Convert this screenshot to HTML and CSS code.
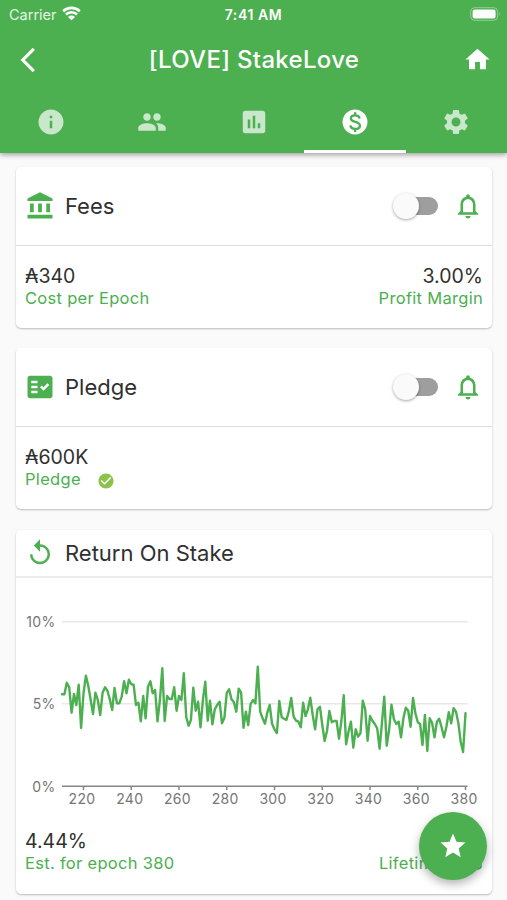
FILE: index.html
```html
<!DOCTYPE html>
<html lang="en">

<head>
    <meta charset="UTF-8">
    <title>StakeLove</title>
    <link rel="stylesheet" href="styles.css">
</head>

<body>
    <header class="app-bar">
        <div class="status">
            <div class="carrier">
                <span>Carrier</span>
                <svg width="19" height="15" viewBox="0 0 19 15">
                    <path d="M1.2 5.2a12 12 0 0 1 16.6 0M4 8.500a7.800 7.800 0 0 1 11 0" fill="none" stroke="#fff" stroke-width="2.700" />
                    <path d="M9.5 14.2L6 10.9a5 5 0 0 1 7 0z" fill="#fff" />
                </svg>
            </div>
            <span class="time">7:41 AM</span>
            <div class="power">
                <svg width="31" height="14" viewBox="0 0 31 14">
                    <rect x=".7" y=".7" width="27" height="12.6" rx="4" fill="none" stroke="#fff" stroke-opacity=".4" />
                    <rect x="2.6" y="2.6" width="23" height="8.8" rx="2.2" fill="#fff" />
                    <path d="M29 4.8q1.6 2.2 0 4.4z" fill="#fff" fill-opacity=".4" />
                </svg>
            </div>
        </div>
        <div class="title-bar">
            <svg class="back" width="16" height="26" viewBox="0 0 16 26">
                <path d="M13.8 1.8L2.8 13l11 11.2" fill="none" stroke="#fff" stroke-width="3.2" />
            </svg>
            <h1>[LOVE] StakeLove</h1>
            <svg class="home" width="29" height="29" viewBox="0 0 24 24">
                <path d="M10 20v-6h4v6h5v-8h3L12 3 2 12h3v8z" />
            </svg>
        </div>
        <nav class="tabs">
            <div class="tab">
                <svg viewBox="0 0 24 24"><path d="M12 2C6.48 2 2 6.48 2 12s4.48 10 10 10 10-4.48 10-10S17.52 2 12 2zm1 15h-2v-6h2v6zm0-8h-2V7h2v2z" /></svg>
            </div>
            <div class="tab">
                <svg viewBox="0 0 24 24"><path d="M16 11c1.66 0 2.99-1.34 2.99-3S17.66 5 16 5s-3 1.34-3 3 1.34 3 3 3zm-8 0c1.66 0 2.99-1.34 2.99-3S9.66 5 8 5 5 6.34 5 8s1.34 3 3 3zm0 2c-2.33 0-7 1.17-7 3.5V19h14v-2.5c0-2.33-4.67-3.5-7-3.5zm8 0c-.29 0-.62.02-.97.05 1.16.84 1.97 1.97 1.97 3.45V19h6v-2.5c0-2.33-4.67-3.5-7-3.5z" /></svg>
            </div>
            <div class="tab">
                <svg viewBox="0 0 24 24"><path d="M19 3H5c-1.1 0-2 .9-2 2v14c0 1.1.9 2 2 2h14c1.1 0 2-.9 2-2V5c0-1.1-.9-2-2-2zM9 17H7v-7h2v7zm4 0h-2V7h2v10zm4 0h-2v-4h2v4z" /></svg>
            </div>
            <div class="tab active">
                <svg viewBox="0 0 24 24"><path d="M12 2C6.48 2 2 6.48 2 12s4.48 10 10 10 10-4.48 10-10S17.52 2 12 2z" /><path class="dollar" d="M15.6 9.3c-.1-1.6-1.4-2.6-3.500-2.600-2 0-3.400.9-3.400 2.500 0 3.700 7.200 1.800 7.200 5.700 0 1.700-1.500 2.600-3.700 2.600-2.300 0-3.700-1-3.900-2.800M12.100 4.200v2.500M12.100 17.400v2.500" /></svg>
            </div>
            <div class="tab">
                <svg viewBox="0 0 24 24"><path d="M19.14 12.94c.04-.3.06-.61.06-.94 0-.32-.02-.64-.07-.94l2.03-1.58c.18-.14.23-.41.12-.61l-1.92-3.32c-.12-.22-.37-.29-.59-.22l-2.39.96c-.5-.38-1.03-.7-1.62-.94l-.36-2.54c-.04-.24-.24-.41-.48-.41h-3.84c-.24 0-.43.17-.47.41l-.36 2.54c-.59.24-1.13.57-1.62.94l-2.39-.96c-.22-.08-.47 0-.59.22L2.74 8.87c-.12.21-.08.47.12.61l2.03 1.58c-.05.3-.09.63-.09.94s.02.64.07.94l-2.03 1.58c-.18.14-.23.41-.12.61l1.92 3.32c.12.22.37.29.59.22l2.39-.96c.5.38 1.03.7 1.62.94l.36 2.54c.05.24.24.41.48.41h3.84c.24 0 .44-.17.47-.41l.36-2.54c.59-.24 1.13-.56 1.62-.94l2.39.96c.22.08.47 0 .59-.22l1.92-3.32c.12-.22.07-.47-.12-.61l-2.01-1.58zM12 15.6c-1.98 0-3.6-1.62-3.6-3.6s1.62-3.6 3.6-3.6 3.6 1.62 3.6 3.6-1.62 3.6-3.6 3.6z" /></svg>
            </div>
        </nav>
    </header>

    <main class="cards">
        <section class="card">
            <div class="card-head">
                <svg class="icon" viewBox="0 0 24 24"><path d="M4 10h3v7H4zM10.5 10h3v7h-3zM2 19h20v3H2zM17 10h3v7h-3zM12 1L2 6v2h20V6z" /></svg>
                <h2>Fees</h2>
                <div class="switch"></div>
                <svg class="bell" viewBox="0 0 24 24"><path d="M12 22c1.1 0 2-.9 2-2h-4c0 1.1.9 2 2 2zm6-6v-5c0-3.07-1.63-5.64-4.5-6.32V4c0-.83-.67-1.5-1.5-1.5s-1.5.67-1.5 1.5v.68C7.64 5.36 6 7.92 6 11v5l-2 2v1h16v-1l-2-2zm-2 1H8v-6c0-2.48 1.51-4.5 4-4.5s4 2.02 4 4.5v6z" /></svg>
            </div>
            <div class="card-body">
                <div class="stat">
                    <p class="value">₳340</p>
                    <p class="label">Cost per Epoch</p>
                </div>
                <div class="stat right">
                    <p class="value">3.00%</p>
                    <p class="label">Profit Margin</p>
                </div>
            </div>
        </section>

        <section class="card">
            <div class="card-head">
                <svg class="icon" viewBox="0 0 24 24"><path fill-rule="evenodd" d="M20 3H4c-1.1 0-2 .9-2 2v14c0 1.1.9 2 2 2h16c1.1 0 2-.9 2-2V5c0-1.1-.9-2-2-2zM10 17H5v-2h5v2zm0-4H5v-2h5v2zm0-4H5V7h5v2zm4.82 6L12 12.16l1.41-1.41 1.41 1.42L17.99 9l1.42 1.42L14.82 15z" /></svg>
                <h2>Pledge</h2>
                <div class="switch"></div>
                <svg class="bell" viewBox="0 0 24 24"><path d="M12 22c1.1 0 2-.9 2-2h-4c0 1.1.9 2 2 2zm6-6v-5c0-3.07-1.63-5.64-4.5-6.32V4c0-.83-.67-1.5-1.5-1.5s-1.5.67-1.5 1.5v.68C7.64 5.36 6 7.92 6 11v5l-2 2v1h16v-1l-2-2zm-2 1H8v-6c0-2.48 1.51-4.5 4-4.5s4 2.02 4 4.5v6z" /></svg>
            </div>
            <div class="card-body">
                <div class="stat">
                    <p class="value">₳600K</p>
                    <p class="label">Pledge
                        <svg class="check" width="18" height="18" viewBox="0 0 24 24"><path d="M12 2C6.48 2 2 6.48 2 12s4.48 10 10 10 10-4.48 10-10S17.52 2 12 2zm-2 15l-5-5 1.41-1.41L10 14.17l7.59-7.59L19 8l-9 9z" /></svg>
                    </p>
                </div>
            </div>
        </section>

        <section class="card chart-card">
            <div class="card-head">
                <svg class="icon" viewBox="0 0 24 24"><path d="M12 5V1L7 6l5 5V7c3.31 0 6 2.69 6 6s-2.69 6-6 6-6-2.69-6-6H4c0 4.42 3.58 8 8 8s8-3.58 8-8-3.58-8-8-8z" /></svg>
                <h2>Return On Stake</h2>
            </div>
            <svg class="chart" id="chart" width="476" height="252" viewBox="16 578 476 252">
                <path class="grid" d="M62 621.7h405.5M62 703.7h405.5" />
                <path class="axis" d="M62 786.3h405.5" />
                <g class="y-label">
                    <text x="55.5" y="626.5">10%</text>
                    <text x="55.5" y="708.5">5%</text>
                    <text x="55.5" y="791.5">0%</text>
                </g>
                <g class="x-label" id="xLabel"></g>
                <polyline id="line" />
            </svg>
            <div class="card-body">
                <div class="stat">
                    <p class="value">4.44%</p>
                    <p class="label">Est. for epoch 380</p>
                </div>
                <div class="stat right">
                    <p class="label">Lifetime ROS</p>
                </div>
            </div>
        </section>
    </main>

    <div class="fab">
        <svg width="30" height="30" viewBox="0 0 24 24"><path d="M12 17.27L18.18 21l-1.64-7.03L22 9.24l-7.19-.61L12 2 9.19 8.63 2 9.24l5.46 4.73L5.82 21z" /></svg>
    </div>

    <script src="chart.js"></script>
</body>

</html>
```
FILE: styles.css
```css
* {
    padding: 0;
    margin: 0;
    box-sizing: border-box;
}

body {
    width: 507px;
    height: 900px;
    overflow: hidden;
    background: #fafafa;
    color: #303030;
    font-family: Inter, "Liberation Sans", sans-serif;
}

.app-bar {
    position: relative;
    height: 153px;
    background: #4caf50;
    color: #fff;
    box-shadow: 0 2px 5px rgba(0, 0, 0, 0.35);
}

.app-bar svg {
    fill: #fff;
}

.status {
    display: grid;
    grid-template-columns: 1fr auto 1fr;
    align-items: center;
    height: 28px;
    padding: 0 6px 0 9px;
}

.carrier {
    display: flex;
    align-items: center;
    gap: 5px;
    color: #e6f4e7;
    font-size: 14.5px;
}

.carrier svg {
    margin-top: -2px;
}

.time {
    margin-left: -3px;
    font-size: 14px;
    font-weight: 600;
    letter-spacing: 0.6px;
}

.power {
    display: flex;
    justify-content: flex-end;
    margin-top: -1px;
}

.title-bar {
    display: grid;
    grid-template-columns: 60px 1fr 60px;
    align-items: center;
    height: 63px;
}

.title-bar .back {
    margin-left: 20px;
}

.title-bar .home {
    margin-left: 16px;
}

.title-bar h1 {
    padding-left: 1px;
    text-align: center;
    font-size: 24px;
    font-weight: 500;
    letter-spacing: 0.3px;
}

.tabs {
    display: flex;
    height: 62px;
}

.tab {
    display: flex;
    flex: 1;
    align-items: center;
    justify-content: center;
    border-bottom: 3px solid transparent;
    padding-top: 3px;
}

.tab svg {
    width: 30px;
    height: 30px;
    opacity: 0.7;
}

.tab.active {
    border-bottom-color: #fff;
}

.tab.active svg {
    opacity: 1;
}

.tab .dollar {
    fill: none;
    stroke: #4caf50;
    stroke-width: 1.9;
}

.cards {
    display: flex;
    flex-direction: column;
    gap: 20px;
    padding: 14px 15px 0 16px;
}

.card {
    height: 161px;
    background: #fff;
    border-radius: 5px;
    box-shadow: 0 1px 2px rgba(0, 0, 0, 0.26);
}

.chart-card {
    height: 364px;
    margin-top: 1px;
}

.card-head {
    display: flex;
    align-items: center;
    height: 79px;
    padding: 0 9px;
    border-bottom: 1px solid #dedede;
}

.chart-card .card-head {
    height: 48px;
    border-bottom: 2px solid #ececec;
}

.card-head svg {
    fill: #4caf50;
}

.icon {
    width: 30px;
    height: 30px;
}

.bell {
    width: 30px;
    height: 30px;
    margin-left: 15px;
}

h2 {
    flex: 1;
    margin-left: 10px;
    font-size: 22px;
    font-weight: 400;
}

.switch {
    position: relative;
    width: 42px;
    height: 18px;
    border-radius: 9px;
    background: #9e9e9e;
}

.switch::before {
    content: "";
    position: absolute;
    top: -4px;
    left: -3px;
    width: 26px;
    height: 26px;
    border-radius: 50%;
    background: #fafafa;
    box-shadow: 0 1px 3px rgba(0, 0, 0, 0.35);
}

.card-body {
    display: flex;
    justify-content: space-between;
    align-items: flex-end;
    padding: 19px 9px 0;
}

.chart-card .card-body {
    padding-top: 0;
}

.right {
    text-align: right;
}

.value {
    line-height: 23px;
    font-size: 19.5px;
}

.label {
    display: flex;
    align-items: center;
    height: 20px;
    color: #4caf50;
    font-size: 16.5px;
    letter-spacing: 0.3px;
}

.check {
    margin: 4px 0 0 16px;
    fill: #8bc34a;
}

.chart {
    display: block;
}

.grid {
    stroke: #e8e8e8;
    stroke-width: 1.5;
}

.axis {
    stroke: #868686;
    stroke-width: 1.5;
}

.y-label,
.x-label {
    fill: #757575;
    font-size: 14px;
    letter-spacing: 0.3px;
}

.y-label {
    text-anchor: end;
}

.x-label {
    text-anchor: middle;
}

#line {
    fill: none;
    stroke: #4caf50;
    stroke-width: 2.4;
    stroke-linejoin: round;
    stroke-linecap: round;
}

.fab {
    position: fixed;
    right: 20px;
    bottom: 20px;
    display: flex;
    align-items: center;
    justify-content: center;
    width: 68px;
    height: 68px;
    border-radius: 50%;
    background: #4caf50;
    box-shadow: 0 4px 10px rgba(0, 0, 0, 0.3);
}

.fab svg {
    fill: #fff;
}
```
FILE: chart.js
```js
// one value per epoch, 211 to 380, in thirds of a pixel below y = 650
var values = [
    133, 133, 98, 112, 188, 132, 165, 104, 234, 130, 77, 108, 150, 192, 128, 150, 195, 128, 112, 122,
    148, 180, 114, 160, 160, 140, 94, 130, 89, 103, 104, 165, 158, 214, 138, 205, 110, 94, 130, 120,
    214, 150, 55, 213, 138, 147, 147, 112, 182, 138, 150, 70, 200, 227, 210, 113, 182, 155, 232, 150,
    95, 212, 152, 223, 178, 165, 155, 220, 203, 128, 118, 148, 157, 185, 116, 128, 233, 185, 225, 162,
    150, 160, 50, 185, 205, 221, 188, 165, 222, 238, 249, 153, 202, 206, 210, 185, 144, 200, 212, 215,
    232, 158, 198, 178, 143, 195, 238, 178, 170, 225, 273, 243, 183, 217, 213, 213, 266, 213, 136, 283,
    245, 215, 293, 238, 260, 249, 152, 178, 272, 198, 212, 222, 235, 296, 220, 140, 287, 240, 164, 208,
    222, 215, 262, 205, 173, 182, 230, 144, 190, 217, 222, 285, 195, 303, 205, 218, 262, 215, 206, 232,
    262, 230, 187, 220, 175, 185, 218, 275, 306, 190
];
var firstEpoch = 211,
    step = 2.3875,
    xLabel = document.getElementById('xLabel'),
    labels = '';

function epochX(epoch) {
    return 83.5 + (epoch - 220) * step;
}

document.getElementById('line').setAttribute('points', values.map(function (v, i) {
    return epochX(firstEpoch + i).toFixed(1) + ',' + (650 + v / 3).toFixed(1);
}).join(' '));

for (var epoch = 220; epoch <= 380; epoch += 20) {
    var x = epochX(epoch);
    labels += '<path class="axis" d="M' + x + ' 786v4" />';
    labels += '<text x="' + (x - 1.5) + '" y="803.5">' + epoch + '</text>';
}
xLabel.innerHTML = labels;
```
